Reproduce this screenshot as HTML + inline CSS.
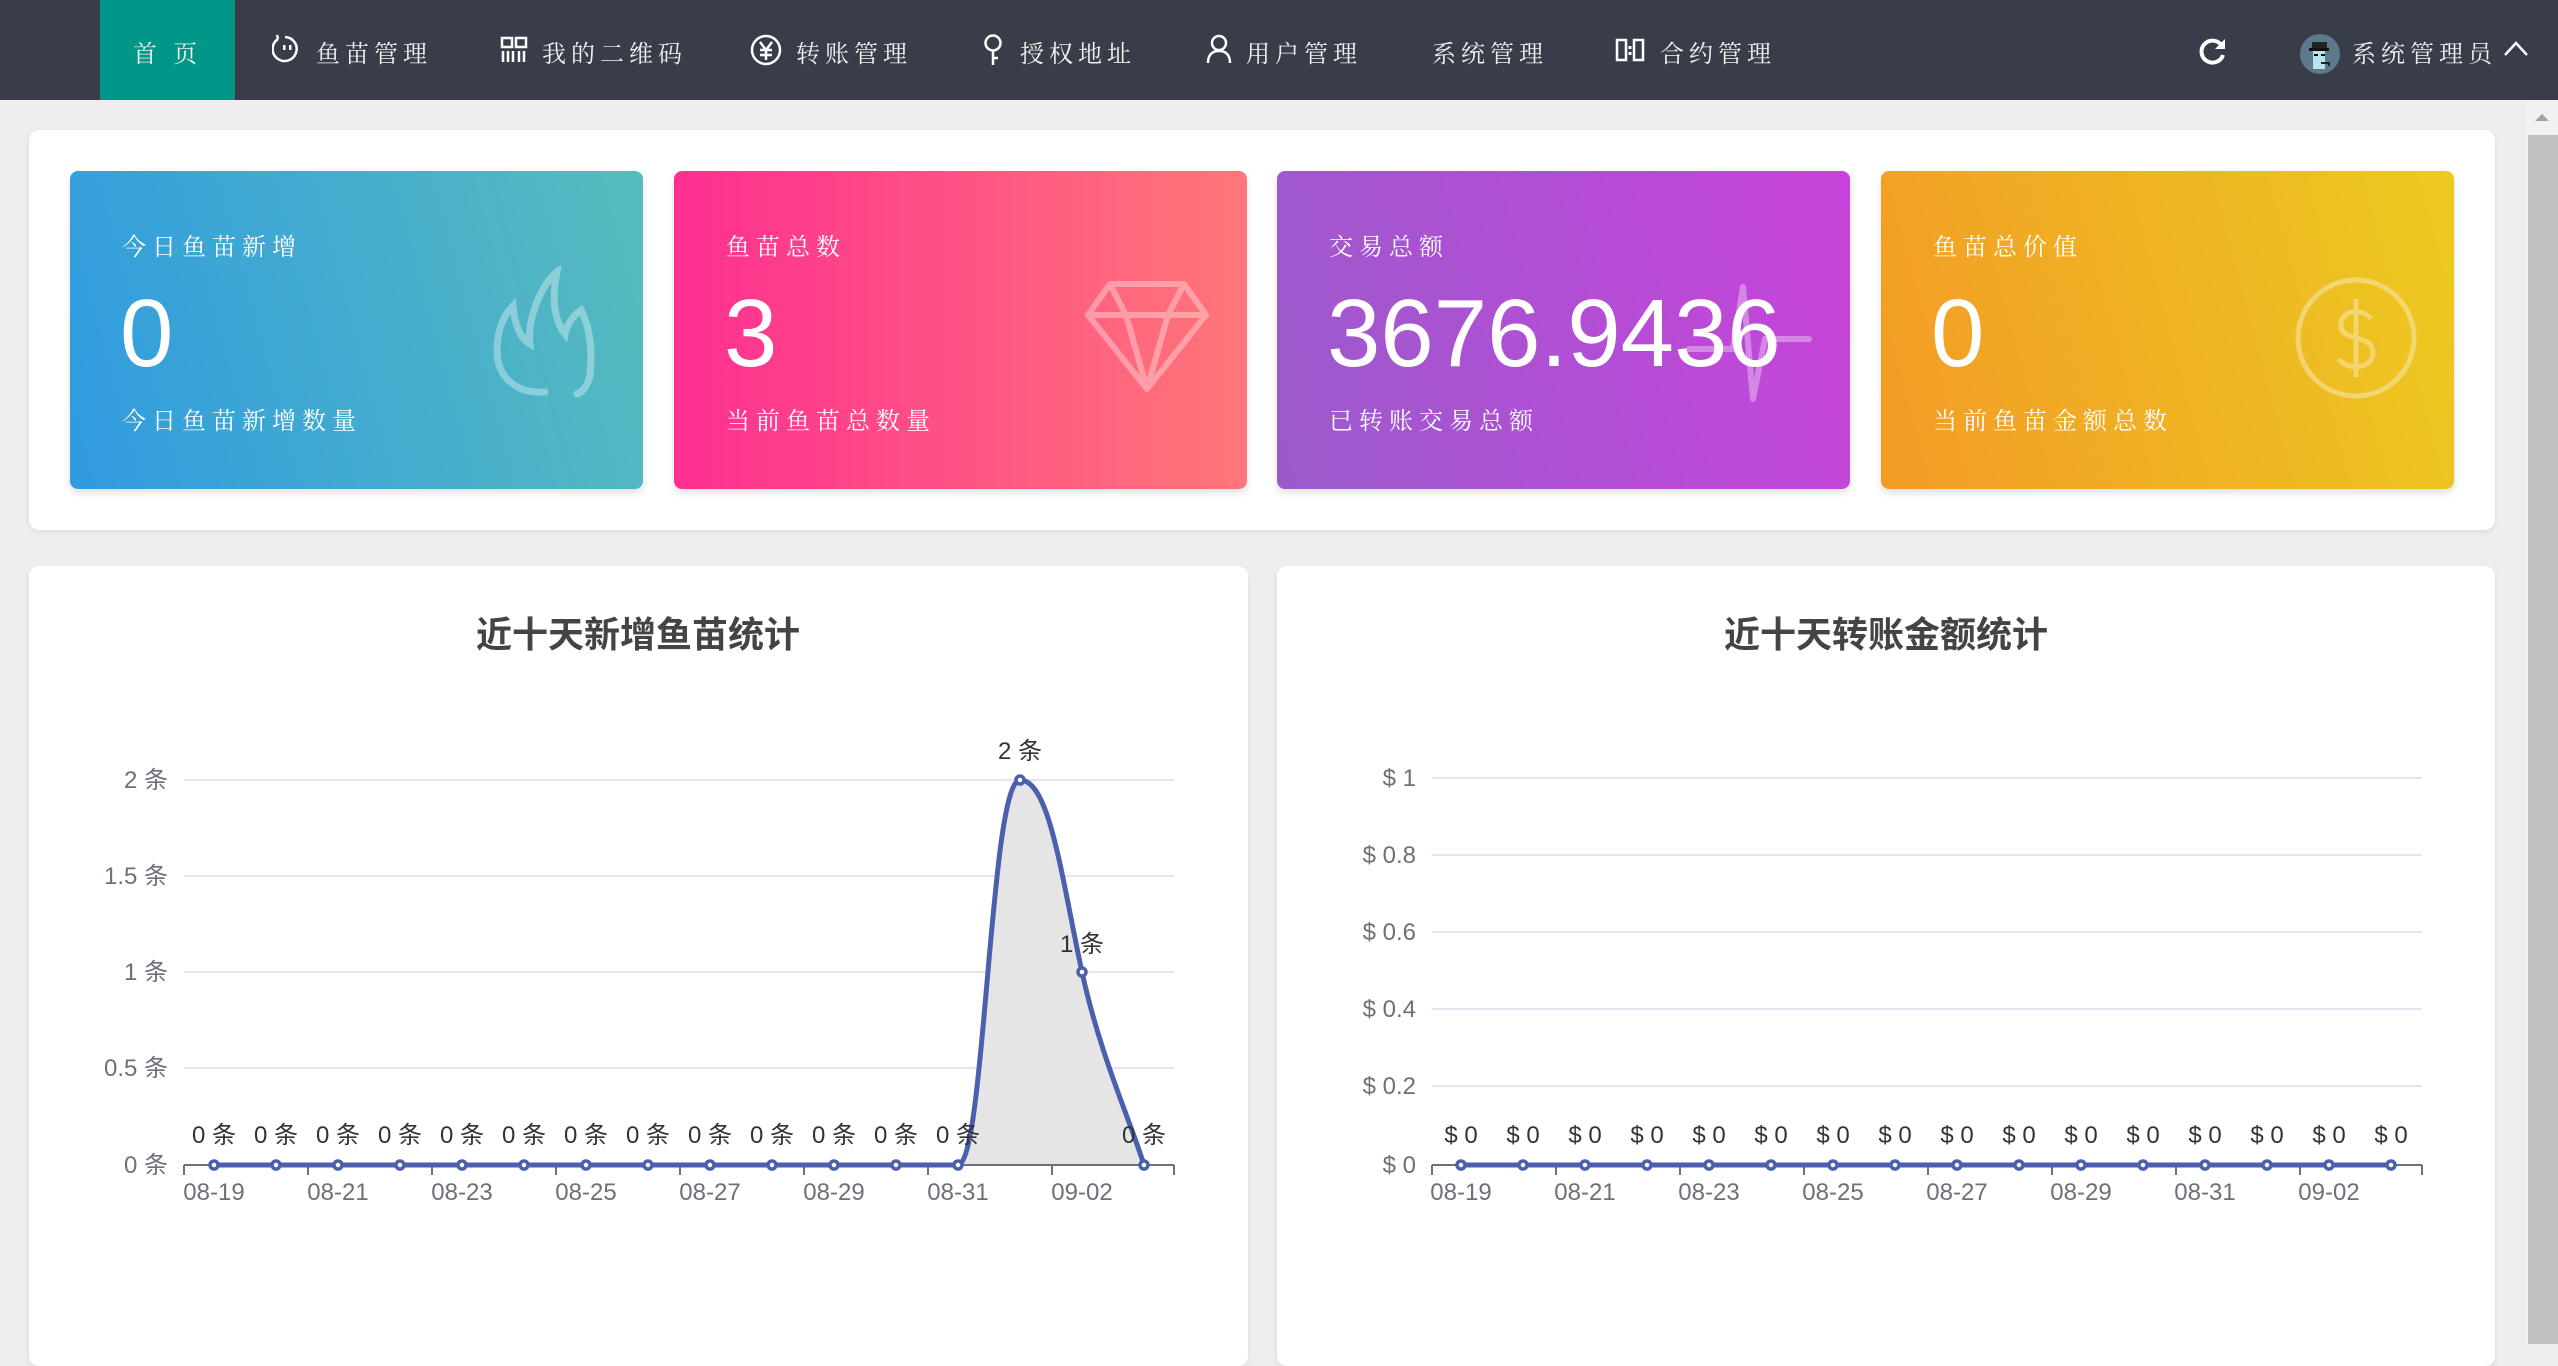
<!DOCTYPE html>
<html><head><meta charset="utf-8">
<style>
*{margin:0;padding:0;box-sizing:border-box}
html,body{width:2558px;height:1344px;overflow:hidden;background:#eeeeee;font-family:"Liberation Sans","Noto Sans CJK SC",sans-serif}
.nav{position:absolute;left:0;top:0;width:2558px;height:100px;background:#393d49}
.nav .it{position:absolute;top:0;height:100px;line-height:104px;color:#f2f2f2;font-size:24px;letter-spacing:5px;font-family:"Noto Serif CJK SC","Liberation Serif",serif;white-space:nowrap}
.nav .act{background:#009688;left:100px;width:135px;text-align:center}
.nav svg{position:absolute}
.panel{position:absolute;background:#fff;border-radius:10px;box-shadow:0 2px 6px rgba(0,0,0,.08)}
.card{position:absolute;top:171px;width:573px;height:318px;border-radius:8px;color:#fff;box-shadow:0 4px 8px rgba(0,0,0,.12);overflow:hidden}
.card .t{position:absolute;left:52px;top:56px;font-size:24px;letter-spacing:6px;font-family:"Noto Serif CJK SC","Liberation Serif",serif}
.card .n{position:absolute;left:50px;top:108px;font-size:96px;line-height:110px;font-family:"Liberation Sans",sans-serif}
.card .s{position:absolute;left:52px;top:230px;font-size:24px;letter-spacing:6px;font-family:"Noto Serif CJK SC","Liberation Serif",serif}
.card svg{position:absolute}
.title{position:absolute;top:606px;font-size:36px;font-weight:bold;color:#444;text-align:center;width:600px;font-family:"Liberation Sans","Noto Sans CJK SC",sans-serif}
</style></head><body>
<div class="nav">
  <div class="it act">首 页</div>
  <svg style="left:272px;top:34px" width="30" height="30" viewBox="0 0 30 30"><path d="M6 5 A12 12 0 1 0 13 3" fill="none" stroke="#fff" stroke-width="2.5"/><path d="M6 5 L5 1" stroke="#fff" stroke-width="2.5"/><rect x="11" y="11" width="2.5" height="5" fill="#fff"/><rect x="17" y="11" width="2.5" height="5" fill="#fff"/></svg>
  <div class="it" style="left:316px">鱼苗管理</div>
  <svg style="left:500px;top:36px" width="28" height="28" viewBox="0 0 28 28"><rect x="2" y="2" width="10" height="9" fill="none" stroke="#fff" stroke-width="2.5"/><rect x="16" y="2" width="10" height="9" fill="none" stroke="#fff" stroke-width="2.5"/><path d="M3 15v11M8 15v11M13 15v11M19 15v11M24 15v11" stroke="#fff" stroke-width="2.5"/></svg>
  <div class="it" style="left:542px">我的二维码</div>
  <svg style="left:750px;top:34px" width="32" height="32" viewBox="0 0 32 32"><circle cx="16" cy="16" r="14" fill="none" stroke="#fff" stroke-width="2.5"/><path d="M10 8l6 8 6-8M16 16v10M10 16h12M10 21h12" fill="none" stroke="#fff" stroke-width="2.5"/></svg>
  <div class="it" style="left:796px">转账管理</div>
  <svg style="left:982px;top:34px" width="22" height="32" viewBox="0 0 22 32"><circle cx="11" cy="9" r="7.5" fill="none" stroke="#fff" stroke-width="2.5"/><path d="M11 17v14M11 24h5" stroke="#fff" stroke-width="2.5"/></svg>
  <div class="it" style="left:1020px">授权地址</div>
  <svg style="left:1206px;top:34px" width="26" height="30" viewBox="0 0 26 30"><circle cx="13" cy="9" r="7" fill="none" stroke="#fff" stroke-width="2.5"/><path d="M2 29c0-9 5-12 11-12s11 3 11 12" fill="none" stroke="#fff" stroke-width="2.5"/></svg>
  <div class="it" style="left:1246px">用户管理</div>
  <div class="it" style="left:1432px">系统管理</div>
  <svg style="left:1615px;top:38px" width="30" height="24" viewBox="0 0 30 24"><rect x="2" y="2" width="9" height="20" fill="none" stroke="#fff" stroke-width="2.5"/><rect x="19" y="2" width="9" height="20" fill="none" stroke="#fff" stroke-width="2.5"/><rect x="13.5" y="8" width="3" height="3" fill="#fff"/><rect x="13.5" y="14" width="3" height="3" fill="#fff"/></svg>
  <div class="it" style="left:1660px">合约管理</div>
  <svg style="left:2198px;top:36px" width="30" height="30" viewBox="0 0 30 30"><path d="M24 10 A11 11 0 1 0 25 19" fill="none" stroke="#fff" stroke-width="4"/><path d="M27 3 L27 13 L17 13 Z" fill="#fff"/></svg>
  <svg style="left:2299px;top:33px" width="42" height="42" viewBox="0 0 42 42"><circle cx="21" cy="21" r="20" fill="#5d7a8a"/><rect x="13" y="9" width="15" height="8" fill="#222"/><rect x="10" y="15" width="20" height="3" fill="#111"/><rect x="14" y="18" width="12" height="18" fill="#b8e4f0"/><rect x="15" y="21" width="4" height="2" fill="#000"/><rect x="22" y="21" width="4" height="2" fill="#000"/><path d="M22 30h8v3" stroke="#222" stroke-width="2" fill="none"/></svg>
  <div class="it" style="left:2352px">系统管理员</div>
  <svg style="left:2503px;top:40px" width="26" height="18" viewBox="0 0 26 18"><path d="M2 15 L13 3 L24 15" fill="none" stroke="#fff" stroke-width="2.5"/></svg>
</div>

<div style="position:absolute;left:2526px;top:100px;width:32px;height:1244px;background:#f1f1f1"></div>
<div style="position:absolute;left:2528px;top:135px;width:30px;height:1209px;background:#c1c1c1"></div>
<svg style="position:absolute;left:2530px;top:110px" width="24" height="14"><path d="M5 11 L12 4 L19 11Z" fill="#a3a3a3"/></svg>

<div class="panel" style="left:29px;top:130px;width:2466px;height:400px"></div>

<div class="card" style="left:70px;background:linear-gradient(75deg,#2f9be0,#58bcbd)">
  <div class="t">今日鱼苗新增</div><div class="n">0</div><div class="s">今日鱼苗新增数量</div>
  <svg style="left:415px;top:95px" width="120" height="140" viewBox="0 0 120 140" fill="none" stroke="rgba(255,255,255,.35)" stroke-width="7" stroke-linecap="round"><path d="M60 126 C30 128 12 110 12 85 C12 65 18 50 28 40 C30 60 35 72 45 78 C42 55 55 20 72 6 C66 35 70 55 80 68 C82 58 88 50 96 44 C104 60 108 80 105 108 C104 118 98 126 92 128"/></svg>
</div>
<div class="card" style="left:674px;background:linear-gradient(90deg,#fe2f91,#ff7778)">
  <div class="t">鱼苗总数</div><div class="n">3</div><div class="s">当前鱼苗总数量</div>
  <svg style="left:408px;top:108px" width="130" height="115" viewBox="0 0 130 115" fill="none" stroke="rgba(255,255,255,.35)" stroke-width="6" stroke-linejoin="round"><path d="M28 5 H102 L124 36 L65 110 L6 36 Z M6 36 H124 M28 5 L44 36 L65 110 L86 36 L102 5"/></svg>
</div>
<div class="card" style="left:1277px;background:linear-gradient(75deg,#9a5bcc,#c843db)">
  <div class="t">交易总额</div><div class="n">3676.9436</div><div class="s">已转账交易总额</div>
  <svg style="left:408px;top:108px" width="130" height="125" viewBox="0 0 130 125" fill="none" stroke="rgba(255,255,255,.35)" stroke-width="6" stroke-linejoin="round" stroke-linecap="round"><path d="M4 70 H48 L58 8 L68 120 L80 60 H124"/></svg>
</div>
<div class="card" style="left:1881px;background:linear-gradient(75deg,#f39b26,#ecca20)">
  <div class="t">鱼苗总价值</div><div class="n">0</div><div class="s">当前鱼苗金额总数</div>
  <svg style="left:412px;top:104px" width="126" height="126" viewBox="0 0 126 126" fill="none" stroke="rgba(255,255,255,.35)" stroke-width="5"><circle cx="63" cy="63" r="58"/><path d="M78 44 C72 34 48 33 48 50 C48 68 80 58 80 78 C80 94 54 96 46 84 M63 24 V102"/></svg>
</div>

<div class="panel" style="left:29px;top:566px;width:1219px;height:800px"></div>
<div class="panel" style="left:1277px;top:566px;width:1218px;height:800px"></div>
<div class="title" style="left:338px">近十天新增鱼苗统计</div>
<div class="title" style="left:1586px">近十天转账金额统计</div>

<svg style="position:absolute;left:0;top:0" width="2558" height="1344" font-family="Liberation Sans, Noto Sans CJK SC, sans-serif" font-size="24">
<g stroke="#e0e6f1" stroke-width="2">
<path d="M184 780H1174M184 876H1174M184 972H1174M184 1068H1174"/>
<path d="M1432 778H2422M1432 855H2422M1432 932H2422M1432 1009H2422M1432 1086H2422"/>
</g>
<g fill="#6e7079" text-anchor="end">
<text x="168" y="788">2 条</text><text x="168" y="884">1.5 条</text><text x="168" y="980">1 条</text><text x="168" y="1076">0.5 条</text><text x="168" y="1173">0 条</text>
<text x="1416" y="786">$ 1</text><text x="1416" y="863">$ 0.8</text><text x="1416" y="940">$ 0.6</text><text x="1416" y="1017">$ 0.4</text><text x="1416" y="1094">$ 0.2</text><text x="1416" y="1173">$ 0</text>
</g>
<path d="M958 1165 C985 1165 990 780 1020 780 C1050 780 1062 880 1082 972 C1100 1055 1130 1120 1144 1165 Z" fill="#e5e5e5"/>
<g stroke="#6e7079" stroke-width="2" fill="none">
<path d="M184 1165H1174M1432 1165H2422"/>
<path d="M184 1165v10M308 1165v10M432 1165v10M556 1165v10M680 1165v10M804 1165v10M928 1165v10M1052 1165v10M1174 1165v10"/>
<path d="M1432 1165v10M1556 1165v10M1680 1165v10M1804 1165v10M1928 1165v10M2052 1165v10M2176 1165v10M2300 1165v10M2422 1165v10"/>
</g>
<g fill="#6e7079" text-anchor="middle">
<text x="214" y="1200">08-19</text><text x="338" y="1200">08-21</text><text x="462" y="1200">08-23</text><text x="586" y="1200">08-25</text><text x="710" y="1200">08-27</text><text x="834" y="1200">08-29</text><text x="958" y="1200">08-31</text><text x="1082" y="1200">09-02</text>
<text x="1461" y="1200">08-19</text><text x="1585" y="1200">08-21</text><text x="1709" y="1200">08-23</text><text x="1833" y="1200">08-25</text><text x="1957" y="1200">08-27</text><text x="2081" y="1200">08-29</text><text x="2205" y="1200">08-31</text><text x="2329" y="1200">09-02</text>
</g>
<g fill="none" stroke="#4a5fae" stroke-width="5">
<path d="M214 1165 H958 C985 1165 990 780 1020 780 C1050 780 1062 880 1082 972 C1100 1055 1130 1120 1144 1165"/>
<path d="M1461 1165 H2391"/>
</g>
<g fill="#fff" stroke="#4a5fae" stroke-width="3.5">
<circle cx="214" cy="1165" r="4"/><circle cx="276" cy="1165" r="4"/><circle cx="338" cy="1165" r="4"/><circle cx="400" cy="1165" r="4"/><circle cx="462" cy="1165" r="4"/><circle cx="524" cy="1165" r="4"/><circle cx="586" cy="1165" r="4"/><circle cx="648" cy="1165" r="4"/><circle cx="710" cy="1165" r="4"/><circle cx="772" cy="1165" r="4"/><circle cx="834" cy="1165" r="4"/><circle cx="896" cy="1165" r="4"/><circle cx="958" cy="1165" r="4"/><circle cx="1020" cy="780" r="4"/><circle cx="1082" cy="972" r="4"/><circle cx="1144" cy="1165" r="4"/>
<circle cx="1461" cy="1165" r="4"/><circle cx="1523" cy="1165" r="4"/><circle cx="1585" cy="1165" r="4"/><circle cx="1647" cy="1165" r="4"/><circle cx="1709" cy="1165" r="4"/><circle cx="1771" cy="1165" r="4"/><circle cx="1833" cy="1165" r="4"/><circle cx="1895" cy="1165" r="4"/><circle cx="1957" cy="1165" r="4"/><circle cx="2019" cy="1165" r="4"/><circle cx="2081" cy="1165" r="4"/><circle cx="2143" cy="1165" r="4"/><circle cx="2205" cy="1165" r="4"/><circle cx="2267" cy="1165" r="4"/><circle cx="2329" cy="1165" r="4"/><circle cx="2391" cy="1165" r="4"/>
</g>
<g fill="#333" text-anchor="middle">
<text x="214" y="1143">0 条</text><text x="276" y="1143">0 条</text><text x="338" y="1143">0 条</text><text x="400" y="1143">0 条</text><text x="462" y="1143">0 条</text><text x="524" y="1143">0 条</text><text x="586" y="1143">0 条</text><text x="648" y="1143">0 条</text><text x="710" y="1143">0 条</text><text x="772" y="1143">0 条</text><text x="834" y="1143">0 条</text><text x="896" y="1143">0 条</text><text x="958" y="1143">0 条</text><text x="1020" y="759">2 条</text><text x="1082" y="952">1 条</text><text x="1144" y="1143">0 条</text>
<text x="1461" y="1143">$ 0</text><text x="1523" y="1143">$ 0</text><text x="1585" y="1143">$ 0</text><text x="1647" y="1143">$ 0</text><text x="1709" y="1143">$ 0</text><text x="1771" y="1143">$ 0</text><text x="1833" y="1143">$ 0</text><text x="1895" y="1143">$ 0</text><text x="1957" y="1143">$ 0</text><text x="2019" y="1143">$ 0</text><text x="2081" y="1143">$ 0</text><text x="2143" y="1143">$ 0</text><text x="2205" y="1143">$ 0</text><text x="2267" y="1143">$ 0</text><text x="2329" y="1143">$ 0</text><text x="2391" y="1143">$ 0</text>
</g>
</svg>
</body></html>
